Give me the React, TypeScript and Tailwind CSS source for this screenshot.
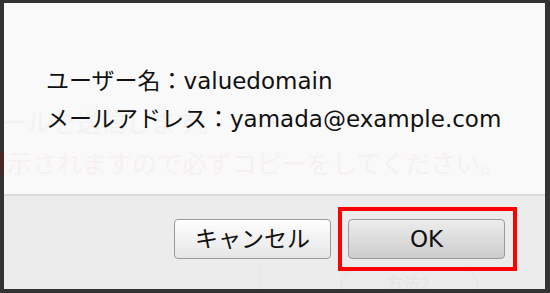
const FONT = {
  fontFamily: '"DejaVu Sans", "Noto Sans CJK JP", sans-serif',
};

export default function App() {
  return (
    <div className="relative h-[293px] w-[550px] overflow-hidden bg-[#333333] pb-[4px] pl-[4px] pr-[5px] pt-[3px]" style={FONT}>
      {/* bit of the page behind, showing on the left edge */}
      <div aria-hidden="true" className="absolute left-[1px] top-[152px] h-[23px] w-[2px] bg-[#5a2020]" />

      <div className="flex h-full flex-col">
        <section className="relative h-[193px] border-b-2 border-[#dcdcdc] bg-[#f9f9f9]">
          <GhostText />
          <div className="relative pl-[42px] pt-[59px] text-[23px] leading-[38px] text-[#111111]">
            <p>ユーザー名：valuedomain</p>
            <p>メールアドレス：yamada@example.com</p>
          </div>
        </section>

        <footer className="relative flex flex-1 items-start justify-end gap-[17px] bg-[#ececec] pr-[40px] pt-[23px]">
          <GhostFooter />
          <DialogButton label="キャンセル" />
          <div className="relative">
            <DialogButton label="OK" primary />
            <span aria-hidden="true" className="pointer-events-none absolute -bottom-[12px] -left-[10px] -right-[12px] -top-[12px] border-4 border-[#ff0000]" />
          </div>
        </footer>
      </div>
    </div>
  );
}

function DialogButton({ label, primary }: { label: string; primary?: boolean }) {
  const tone = primary
    ? "bg-gradient-to-b from-[#ececec] to-[#cdcdcd]"
    : "bg-gradient-to-b from-[#fefefe] to-[#e6e6e6]";

  return (
    <button
      type="button"
      className={`relative flex h-[40px] w-[157px] items-center justify-center rounded-[4px] border-[1.5px] border-[#9a9a9a] text-[23px] leading-none text-[#111111] ${tone}`}
      style={FONT}
    >
      {label}
    </button>
  );
}

// faint text of the page under the dialog, bleeding through
function GhostText() {
  return (
    <div aria-hidden="true" className="pointer-events-none absolute inset-0 overflow-hidden" style={{ fontFamily: '"Noto Sans CJK JP", sans-serif' }}>
      <p className="absolute left-[-3px] top-[106px] whitespace-nowrap text-[25px] leading-[25px] text-[#f2f2f2]">
        ールを送信します。
      </p>
      <p className="absolute left-[3px] top-[147px] whitespace-nowrap text-[25px] leading-[25px] text-[#f7f0f0]">
        示されますので必ずコピーをしてください。
      </p>
    </div>
  );
}

function GhostFooter() {
  return (
    <div aria-hidden="true" className="pointer-events-none absolute inset-0 overflow-hidden">
      <span className="absolute bottom-0 left-[256px] top-[66px] w-px bg-[#e6e6e6]" />
      <span className="absolute left-[336px] top-[74px] h-[30px] w-[138px] rounded-full border border-[#e4e4e4]" />
      <span
        className="absolute left-[382px] top-[77px] text-[17px] font-bold leading-[20px] text-[#e6e6e6]"
        style={{ fontFamily: '"Noto Sans CJK JP", sans-serif' }}
      >
        方法2
      </span>
    </div>
  );
}
